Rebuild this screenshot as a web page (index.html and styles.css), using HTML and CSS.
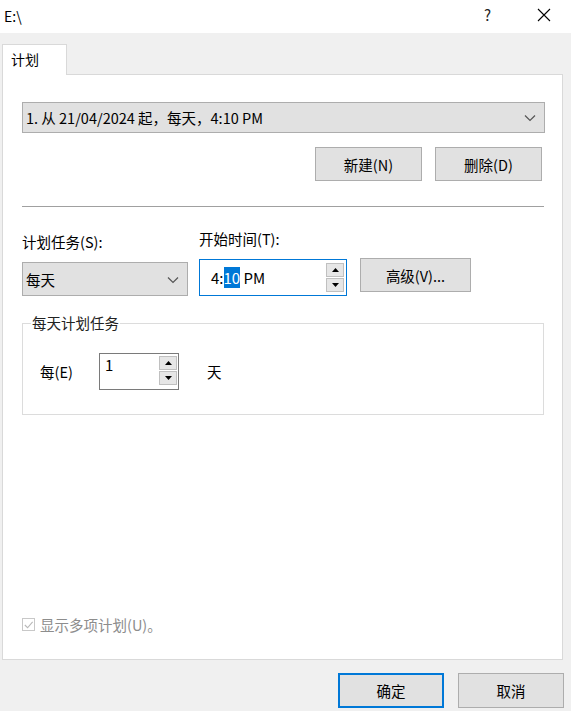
FILE: index.html
```html
<!DOCTYPE html>
<html lang="zh-CN">
<head>
<meta charset="utf-8">
<title>E:\</title>
<link rel="stylesheet" href="styles.css">
</head>
<body>
<div class="window">
  <div class="titlebar">
    <span class="title">E:\</span>
    <span class="help">?</span>
    <span class="close">
      <svg width="14" height="14" viewBox="0 0 14 14"><path d="M1 1 L13 13 M13 1 L1 13" stroke="#000" stroke-width="1.1" fill="none"/></svg>
    </span>
  </div>
  <div class="body">
    <div class="tabs">
      <div class="tab">计划</div>
    </div>
    <div class="panel">
      <div class="combo wide">
        <span>1. 从 21/04/2024 起，每天，4:10 PM</span>
        <svg class="chev" width="12" height="8" viewBox="0 0 12 8"><path d="M1 1.5 L6 6.5 L11 1.5" stroke="#555" stroke-width="1.2" fill="none"/></svg>
      </div>
      <div class="btnrow">
        <button class="btn">新建(N)</button>
        <button class="btn">删除(D)</button>
      </div>
      <div class="sep"></div>
      <div class="fields">
        <div class="field f1">
          <label class="lbl">计划任务(S):</label>
          <div class="combo small">
            <span>每天</span>
            <svg class="chev" width="12" height="8" viewBox="0 0 12 8"><path d="M1 1.5 L6 6.5 L11 1.5" stroke="#555" stroke-width="1.2" fill="none"/></svg>
          </div>
        </div>
        <div class="field f2">
          <label class="lbl">开始时间(T):</label>
          <div class="timebox">
            <span class="tval">4:<span class="sel">10</span> PM</span>
            <div class="spin">
              <div class="sb"><svg width="7" height="4" viewBox="0 0 7 4"><path d="M0 4 L3.5 0 L7 4 Z" fill="#000"/></svg></div>
              <div class="sb"><svg width="7" height="4" viewBox="0 0 7 4"><path d="M0 0 L3.5 4 L7 0 Z" fill="#000"/></svg></div>
            </div>
          </div>
        </div>
        <button class="btn adv">高级(V)...</button>
      </div>
      <fieldset class="group">
        <legend>每天计划任务</legend>
        <div class="grow">
          <span class="every">每(E)</span>
          <div class="numbox">
            <span class="nval">1</span>
            <div class="spin small-spin">
              <div class="sb"><svg width="7" height="4" viewBox="0 0 7 4"><path d="M0 4 L3.5 0 L7 4 Z" fill="#000"/></svg></div>
              <div class="sb"><svg width="7" height="4" viewBox="0 0 7 4"><path d="M0 0 L3.5 4 L7 0 Z" fill="#000"/></svg></div>
            </div>
          </div>
          <span class="unit">天</span>
        </div>
      </fieldset>
      <div class="spacer"></div>
      <div class="check">
        <span class="cb">
          <svg width="12" height="12" viewBox="0 0 12 12"><path d="M2 6 L5 9 L10.5 2.5" stroke="#b8b8b8" stroke-width="1.2" fill="none"/></svg>
        </span>
        <span class="ctext">显示多项计划(U)。</span>
      </div>
    </div>
    <div class="footer">
      <button class="btn foot primary">确定</button>
      <button class="btn foot">取消</button>
    </div>
  </div>
</div>
</body>
</html>
```
FILE: styles.css
```css
* { box-sizing: border-box; }
html, body { margin: 0; padding: 0; }
body {
  background: #f0f0f0;
  font-family: "Noto Sans CJK SC", "Noto Sans", sans-serif;
  font-size: 14px;
  color: #000;
  width: 571px;
  height: 711px;
  overflow: hidden;
}
.window { display: flex; flex-direction: column; height: 711px; }
.titlebar {
  height: 33px;
  background: #fff;
  display: flex;
  align-items: center;
  padding-left: 4px;
}
.title { font-size: 14px; flex: 1; margin-top: -2px; }
.help { font-size: 15px; width: 20px; margin-right: 33px; margin-top: -4px; color: #222; }
.close { width: 14px; margin-right: 20px; display: flex; margin-top: -4px; }
.body { flex: 1; display: flex; flex-direction: column; }
.tabs { display: flex; padding-left: 2px; margin-top: 11px; height: 30px; }
.tab {
  width: 65px;
  height: 31px;
  background: #fff;
  border: 1px solid #d9d9d9;
  border-bottom: none;
  padding-left: 8px;
  line-height: 28px;
  font-size: 14px;
  position: relative;
  z-index: 1;
}
.panel {
  margin-left: 2px;
  width: 561px;
  height: 586px;
  background: #fff;
  border: 1px solid #d9d9d9;
  padding: 27px 18px 24px 19px;
  display: flex;
  flex-direction: column;
}
.combo {
  background: #e1e1e1;
  border: 1px solid #adadad;
  display: flex;
  align-items: center;
  justify-content: space-between;
  padding: 0 8px 0 3px;
  font-size: 14.5px;
}
.combo.wide { height: 31px; width: 523px; }
.combo.small { height: 34px; width: 166px; padding-left: 3px; }
.chev { margin-top: 1px; }
.btnrow {
  display: flex;
  justify-content: flex-end;
  gap: 13px;
  margin-top: 14px;
  padding-right: 2px;
}
.btn {
  font-family: inherit;
  font-size: 14.5px;
  color: #000;
  background: #e1e1e1;
  border: 1px solid #adadad;
  width: 107px;
  height: 34px;
  padding: 0;
}
.sep { height: 1px; background: #a0a0a0; margin-top: 25px; width: 522px; }
.fields { display: flex; align-items: flex-end; margin-top: 22px; }
.field { display: flex; flex-direction: column; }
.f1 { width: 177px; }
.f2 { width: 161px; }
.lbl { font-size: 14.5px; height: 20px; line-height: 20px; margin-bottom: 10px; }
.timebox {
  width: 148px;
  height: 37px;
  border: 1px solid #0078d7;
  background: #fff;
  display: flex;
  align-items: center;
  padding-left: 11px;
}
.tval { flex: 1; font-size: 15px; }
.sel { background: #0078d7; color: #fff; }
.spin {
  display: flex;
  flex-direction: column;
  gap: 1px;
  margin-right: 2px;
}
.sb {
  width: 18px;
  height: 14px;
  background: #e6e6e6;
  border: 1px solid #c0c0c0;
  display: flex;
  align-items: center;
  justify-content: center;
}
.adv { width: 111px; height: 34px; margin-bottom: 4px; }
.group {
  margin: 20px 0 0 0;
  width: 522px;
  height: 99px;
  border: 1px solid #dcdcdc;
  padding: 0 0 0 17px;
}
.group legend {
  font-size: 14.5px;
  padding: 0 1px;
  margin-left: -9px;
  line-height: 14px;
  color: #222;
}
.grow { display: flex; align-items: center; margin-top: 23px; }
.every { font-size: 14.5px; width: 59px; }
.numbox {
  width: 80px;
  height: 37px;
  border: 1px solid #7a7a7a;
  display: flex;
  align-items: flex-start;
  background: #fff;
}
.nval { flex: 1; padding-left: 5px; font-size: 15px; line-height: 22px; }
.small-spin { margin-right: 1px; margin-top: 2px; }
.unit { margin-left: 28px; font-size: 14.5px; }
.spacer { flex: 1; }
.check { display: flex; align-items: center; gap: 5px; }
.cb {
  width: 13px;
  height: 13px;
  border: 1px solid #c8c8c8;
  display: flex;
  align-items: center;
  justify-content: center;
}
.ctext { color: #8d8d8d; font-size: 14.5px; }
.footer {
  display: flex;
  justify-content: flex-end;
  gap: 14px;
  padding-right: 7px;
  margin-top: 13px;
}
.foot { width: 106px; height: 35px; }
.primary { border: 2px solid #0078d7; }
```
